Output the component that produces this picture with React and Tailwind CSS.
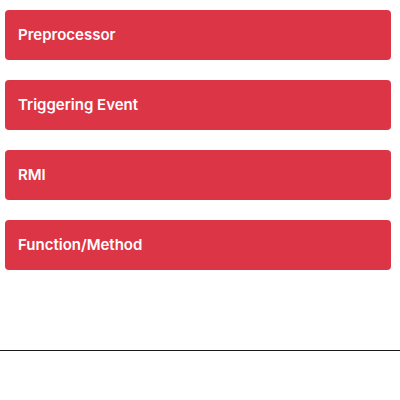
import React from 'react';

const items = ['Preprocessor', 'Triggering Event', 'RMI', 'Function/Method'];

export default function App() {
  return (
    <div className="w-[400px] h-[400px] bg-white pt-[10px]" style={{ fontFamily: 'Inter, "Noto Sans", sans-serif' }}>
      <div className="flex flex-col gap-[20px] ml-[5px] w-[386px]">
        {items.map((label) => (
          <div
            key={label}
            className="h-[50px] rounded-[4px] bg-[#dc3545] text-white font-semibold text-[15px] flex items-center pl-[13px]"
          >
            {label}
          </div>
        ))}
      </div>
      <hr className="mt-[80px] border-t border-[#1a1a1a]" />
    </div>
  );
}
